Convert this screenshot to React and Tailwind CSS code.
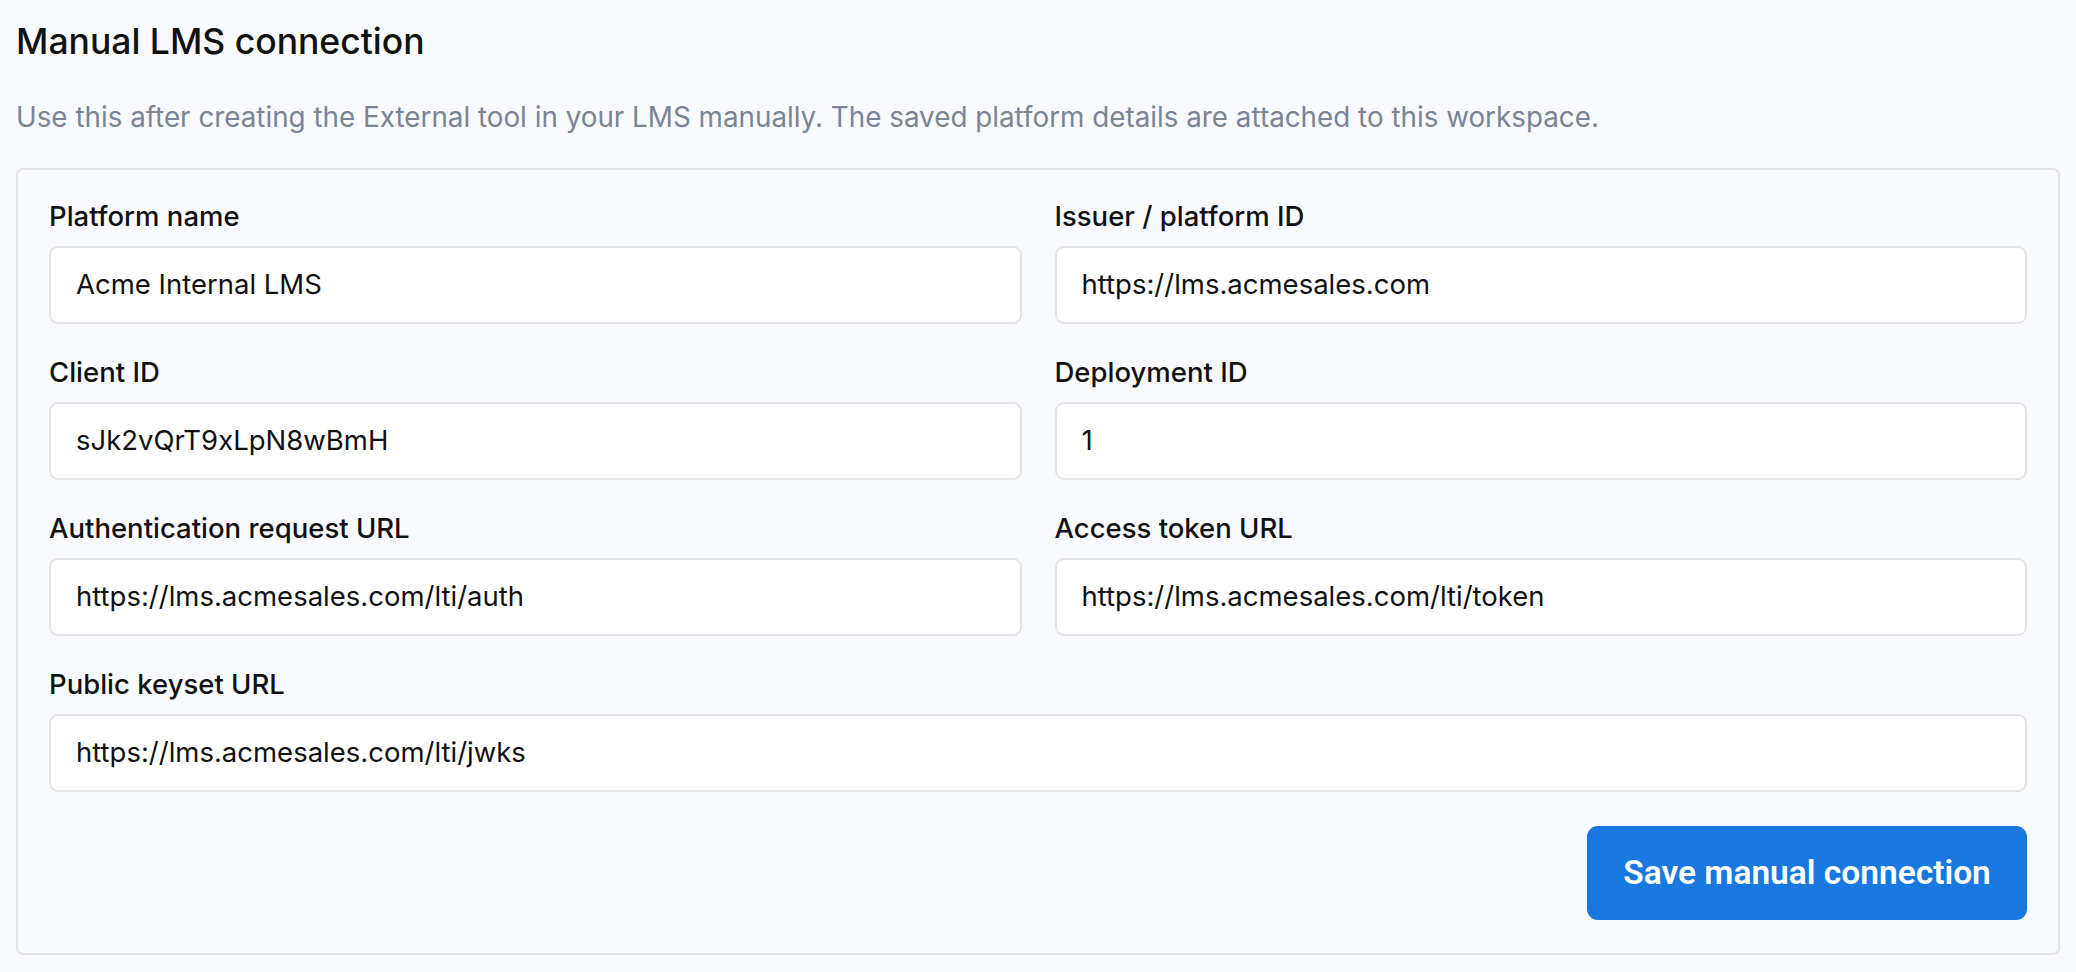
const fields = [
  ["Platform name", "Acme Internal LMS"],
  ["Issuer / platform ID", "https://lms.acmesales.com"],
  ["Client ID", "sJk2vQrT9xLpN8wBmH"],
  ["Deployment ID", "1"],
  ["Authentication request URL", "https://lms.acmesales.com/lti/auth"],
  ["Access token URL", "https://lms.acmesales.com/lti/token"],
];

function Field({ label, value, full }) {
  return (
    <div className={full ? "col-span-2" : ""}>
      <div className="text-[27.5px] leading-[34px] font-medium text-[#111] mb-[13px]">{label}</div>
      <div className="h-[78px] bg-white border-2 border-[#e2e4e8] rounded-[9px] flex items-center px-[25px] text-[27.5px] text-[#111]">
        {value}
      </div>
    </div>
  );
}

export default function App() {
  return (
    <div className="min-h-[972px] bg-[#f9fafd] px-[16px] pt-[20px]" style={{ fontFamily: "Inter, 'Noto Sans', sans-serif" }}>
      <h1 className="text-[35.5px] leading-[44px] font-medium text-[#111]">Manual LMS connection</h1>
      <p className="mt-[35px] text-[27.8px] leading-[36px] text-[#7b8494]">
        Use this after creating the External tool in your LMS manually. The saved platform details are attached to this workspace.
      </p>
      <div className="mt-[33px] border-2 border-[#e2e3e6] rounded-[7px] px-[31px] pt-[29px] pb-[33px] bg-[#f9fafd]">
        <div className="grid grid-cols-2 gap-x-[33px] gap-y-[31px]">
          {fields.map(([l, v]) => (
            <Field key={l} label={l} value={v} />
          ))}
          <Field label="Public keyset URL" value="https://lms.acmesales.com/lti/jwks" full />
        </div>
        <div className="flex justify-end mt-[34px]">
          <button className="w-[440px] h-[94px] rounded-[11px] bg-[#1878e0] text-white text-[33.5px] font-semibold" style={{ fontFamily: "Roboto, Inter, sans-serif" }}>
            Save manual connection
          </button>
        </div>
      </div>
    </div>
  );
}
